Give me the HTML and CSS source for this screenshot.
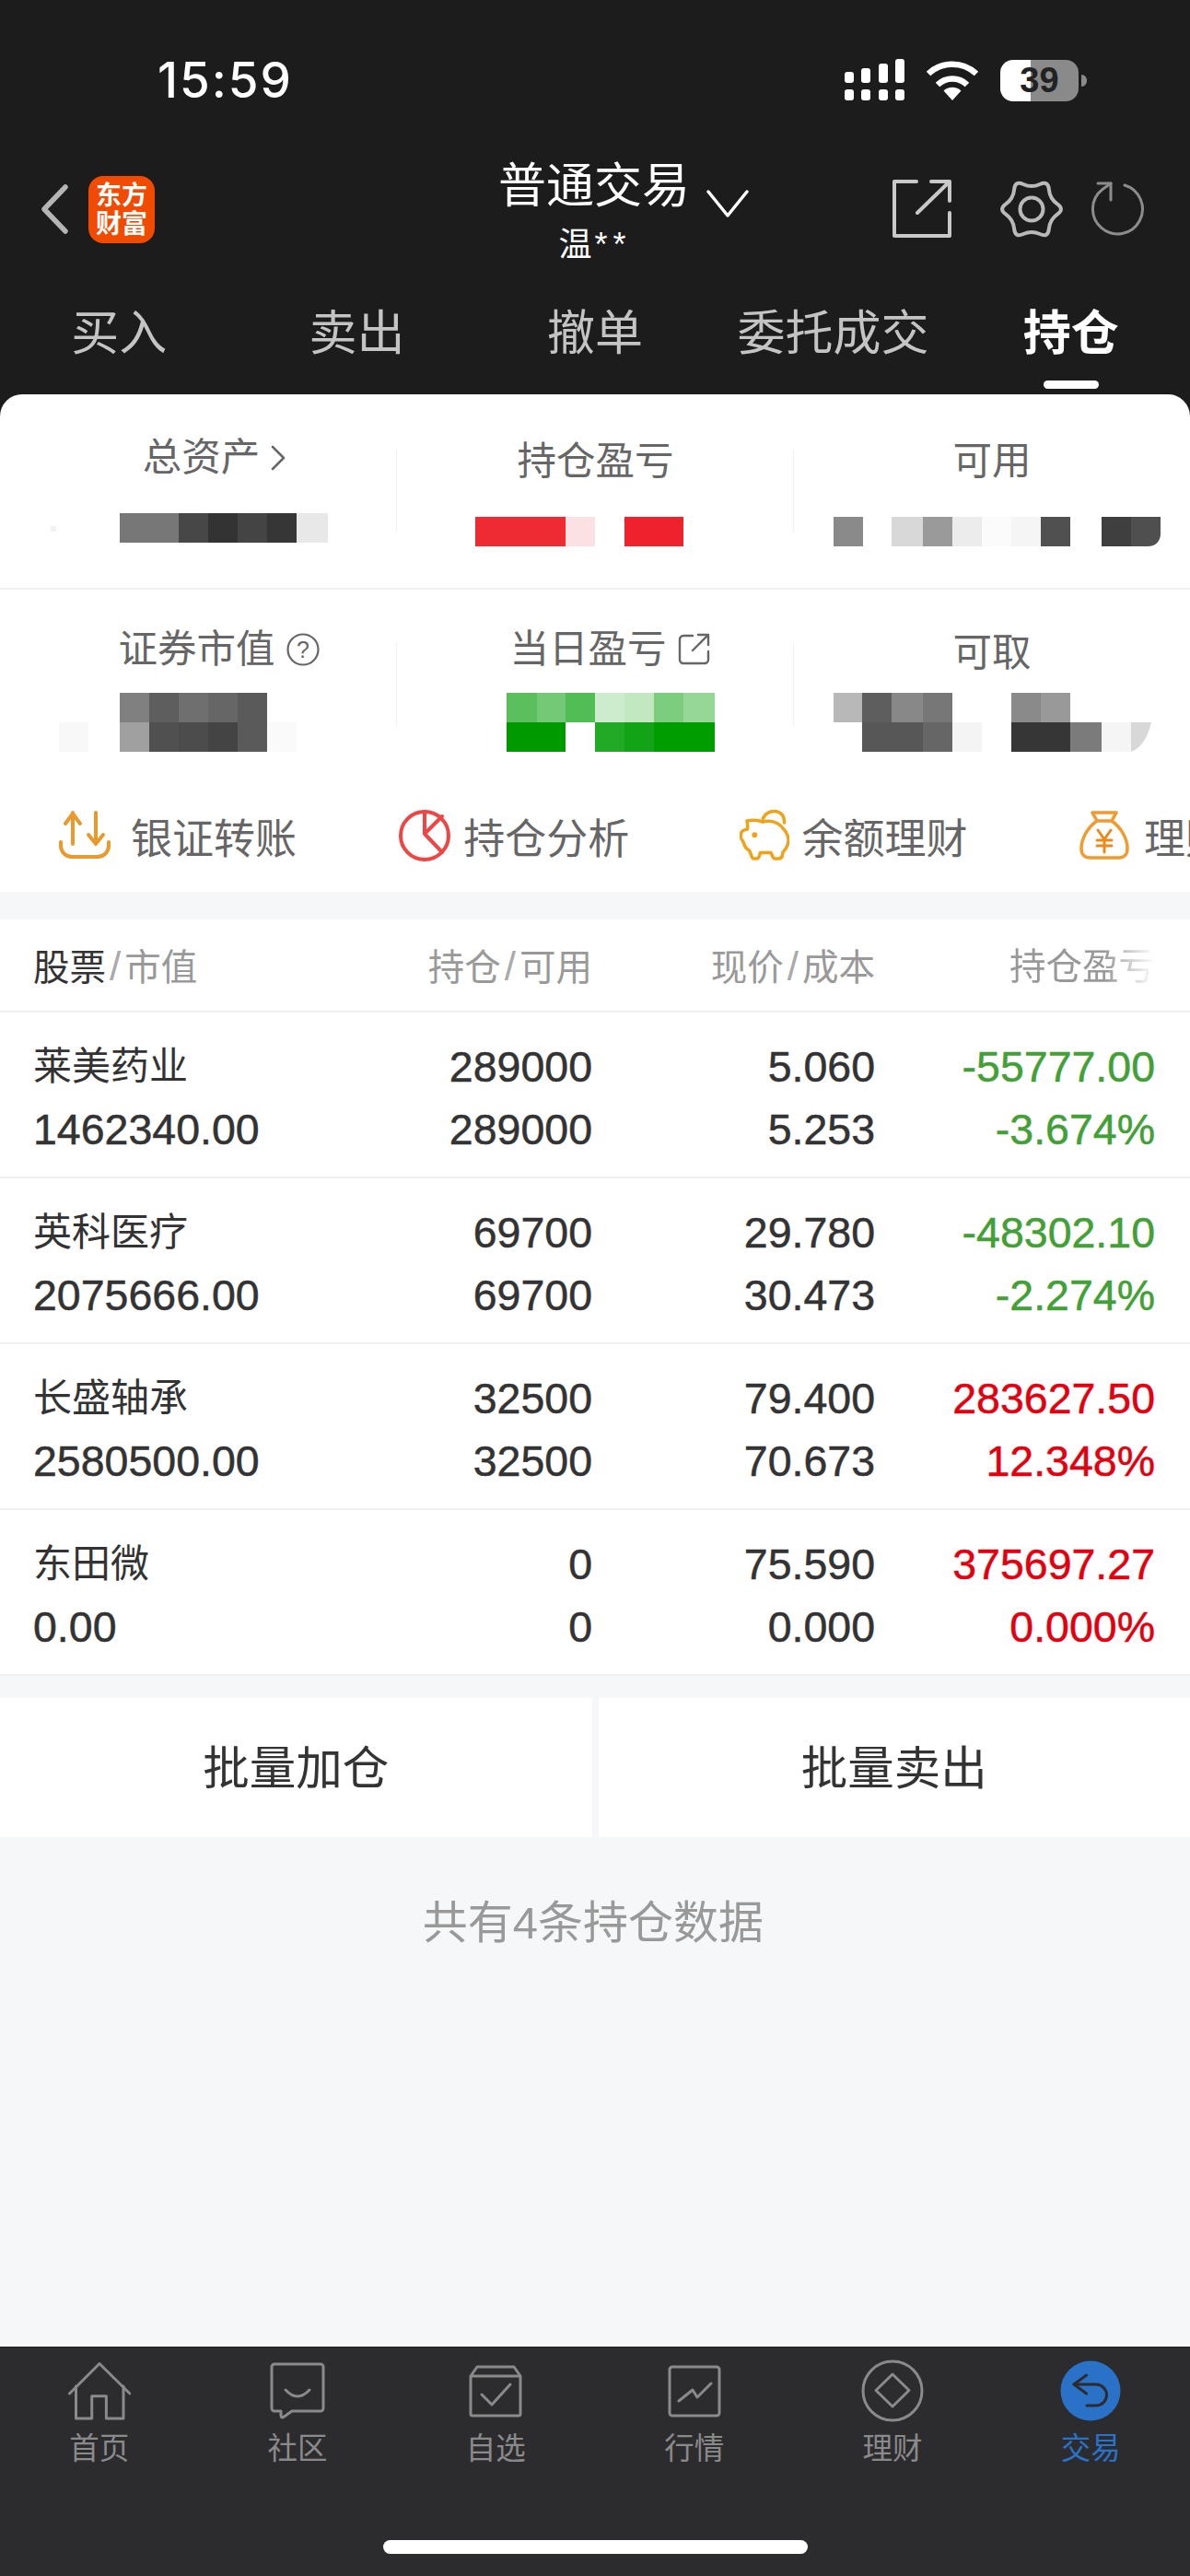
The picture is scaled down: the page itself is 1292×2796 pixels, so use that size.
FILE: index.html
```html
<!DOCTYPE html>
<html lang="zh-CN">
<head>
    <meta charset="UTF-8">
    <meta name="viewport" content="width=device-width, initial-scale=1.0">
    <title>持仓</title>
    <link rel="stylesheet" href="styles.css">
</head>
<body>
    <header class="topbar">
        <div class="statusbar">
            <span class="time">15:59</span>
            <div class="status-icons">
                <svg class="signal" width="66" height="46" viewBox="0 0 66 46" fill="#fff">
                    <rect x="0" y="14" width="10" height="12" rx="3"/>
                    <rect x="18" y="10" width="10" height="16" rx="3"/>
                    <rect x="37" y="5" width="10" height="21" rx="3"/>
                    <rect x="55" y="0" width="10" height="26" rx="3"/>
                    <rect x="0" y="33" width="10" height="12" rx="3"/>
                    <rect x="18" y="33" width="10" height="12" rx="3"/>
                    <rect x="37" y="33" width="10" height="12" rx="3"/>
                    <rect x="55" y="33" width="10" height="12" rx="3"/>
                </svg>
                <svg class="wifi" width="58" height="43" viewBox="0 0 58 43">
                    <path d="M3 14 A38 38 0 0 1 55 14" fill="none" stroke="#fff" stroke-width="6.5"/>
                    <path d="M13 26 A23 23 0 0 1 45 26" fill="none" stroke="#fff" stroke-width="6.5"/>
                    <path d="M29 43 L19.5 32.5 A14 14 0 0 1 38.5 32.5 Z" fill="#fff"/>
                </svg>
                <div class="battery">39</div>
                <div class="battery-nub"></div>
            </div>
        </div>

        <div class="navbar">
            <div class="nav-left">
                <svg width="30" height="54" viewBox="0 0 30 54" fill="none" stroke="#b5b5b5" stroke-width="5.5" stroke-linecap="round" stroke-linejoin="round">
                    <path d="M27 3 L4 27 L27 51"/>
                </svg>
                <div class="logo">东方<br>财富</div>
            </div>
            <div class="nav-title">
                <div class="title-row">
                    <span class="title">普通交易</span>
                    <svg width="46" height="30" viewBox="0 0 46 30" fill="none" stroke="#fff" stroke-width="3.5" stroke-linecap="round" stroke-linejoin="round">
                        <path d="M2 2 L23 28 L44 2"/>
                    </svg>
                </div>
                <div class="account">温<span class="mask-stars">**</span></div>
            </div>
            <div class="nav-right">
                <svg width="64" height="64" viewBox="0 0 64 64" fill="none" stroke="#c8c8c8" stroke-width="4" stroke-linejoin="round" stroke-linecap="round">
                    <path d="M26 2 H2 V61 H62 V36"/>
                    <path d="M27 36 L61 3 M42 2 H62 V23"/>
                </svg>
                <svg width="70" height="70" viewBox="-35 -35 70 70" fill="none" stroke="#b9b9b9" stroke-width="4">
                    <path d="M9 -27.05 Q18 -31.2 18.9 -21.3 Q19.8 -11.45 27.9 -5.7 Q36 0 27.9 5.7 Q19.8 11.45 18.9 21.3 Q18 31.2 9 27.05 Q0 22.9 -9 27.05 Q-18 31.2 -18.9 21.3 Q-19.8 11.45 -27.9 5.7 Q-36 0 -27.9 -5.7 Q-19.8 -11.45 -18.9 -21.3 Q-18 -31.2 -9 -27.05 Q0 -22.9 9 -27.05 Z"/>
                    <circle r="12.5"/>
                </svg>
                <svg width="62" height="62" viewBox="0 0 62 62" fill="none" stroke="#8c8c8c" stroke-width="3" stroke-linecap="round" stroke-linejoin="round">
                    <path d="M38 5 A27 27 0 1 1 14 9.5 L23 3"/>
                    <path d="M9 3 H23 V21"/>
                </svg>
            </div>
        </div>

        <nav class="tabs">
            <div class="tab">买入</div>
            <div class="tab">卖出</div>
            <div class="tab">撤单</div>
            <div class="tab">委托成交</div>
            <div class="tab active">持仓</div>
        </nav>
    </header>

    <main class="content">
        <section class="summary">
            <div class="stat-row first">
                <div class="stat">
                    <div class="stat-label raised with-arrow">总资产
                        <svg width="16" height="28" viewBox="0 0 16 28" fill="none" stroke="#666" stroke-width="2.5" stroke-linecap="round" stroke-linejoin="round"><path d="M2 2 L14 14 L2 26"/></svg>
                    </div>
                    <svg class="mosaic" width="430" height="32" viewBox="0 0 430 32">
                        <rect x="55" y="14" width="6" height="6" fill="#f2f2f2"/>
                        <rect x="130" width="64" height="32" fill="#777"/>
                        <rect x="194" width="32" height="32" fill="#474747"/>
                        <rect x="226" width="32" height="32" fill="#333"/>
                        <rect x="258" width="32" height="32" fill="#444"/>
                        <rect x="290" width="32" height="32" fill="#363636"/>
                        <rect x="322" width="34" height="32" fill="#e8e8e8"/>
                    </svg>
                </div>
                <div class="stat">
                    <div class="stat-label">持仓盈亏</div>
                    <svg class="mosaic" width="430" height="32" viewBox="431 0 430 32">
                        <rect x="516" width="98" height="32" fill="#ee2a32"/>
                        <rect x="614" width="32" height="32" fill="#fbe1e3"/>
                        <rect x="678" width="64" height="32" fill="#ee212d"/>
                    </svg>
                </div>
                <div class="stat last">
                    <div class="stat-label">可用</div>
                    <svg class="mosaic" width="430" height="32" viewBox="862 0 430 32">
                        <rect x="905" width="32" height="32" fill="#8a8a8a"/>
                        <rect x="968" width="34" height="32" fill="#d8d8d8"/>
                        <rect x="1002" width="32" height="32" fill="#9a9a9a"/>
                        <rect x="1034" width="32" height="32" fill="#ececec"/>
                        <rect x="1066" width="32" height="32" fill="#fbfbfb"/>
                        <rect x="1098" width="32" height="32" fill="#f5f5f5"/>
                        <rect x="1130" width="32" height="32" fill="#505050"/>
                        <rect x="1196" width="32" height="32" fill="#3f3f3f"/>
                        <path d="M1228 0 H1260 V20 Q1258 32 1246 32 H1228 Z" fill="#4f4f4f"/>
                    </svg>
                </div>
            </div>
            <div class="stat-row second">
                <div class="stat">
                    <div class="stat-label with-help">证券市值
                        <svg width="36" height="36" viewBox="0 0 36 36" fill="none" stroke="#666" stroke-width="2.2">
                            <circle cx="18" cy="18" r="16.5"/>
                            <text class="help-mark" x="18" y="26.5" text-anchor="middle">?</text>
                        </svg>
                    </div>
                    <svg class="mosaic" width="430" height="64" viewBox="0 0 430 64">
                        <rect x="130" width="32" height="32" fill="#808080"/>
                        <rect x="162" width="32" height="32" fill="#5e5e5e"/>
                        <rect x="194" width="32" height="32" fill="#6f6f6f"/>
                        <rect x="226" width="32" height="32" fill="#666"/>
                        <rect x="258" width="32" height="64" fill="#5a5a5a"/>
                        <rect x="64" y="32" width="32" height="32" fill="#f8f8f8"/>
                        <rect x="130" y="32" width="32" height="32" fill="#a0a0a0"/>
                        <rect x="162" y="32" width="32" height="32" fill="#505050"/>
                        <rect x="194" y="32" width="32" height="32" fill="#4c4c4c"/>
                        <rect x="226" y="32" width="32" height="32" fill="#444"/>
                        <rect x="290" y="32" width="32" height="32" fill="#fafafa"/>
                    </svg>
                </div>
                <div class="stat">
                    <div class="stat-label with-open">当日盈亏
                        <svg width="36" height="36" viewBox="0 0 36 36" fill="none" stroke="#666" stroke-width="2.4" stroke-linecap="round" stroke-linejoin="round">
                            <path d="M16 3 H6 a4 4 0 0 0 -4 4 V29 a4 4 0 0 0 4 4 H29 a4 4 0 0 0 4 -4 V20"/>
                            <path d="M16 19 L32 3 M22 2 H33 V13"/>
                        </svg>
                    </div>
                    <svg class="mosaic" width="430" height="64" viewBox="431 0 430 64">
                        <rect x="550" width="33" height="32" fill="#5cbf5e"/>
                        <rect x="583" width="31" height="32" fill="#74c976"/>
                        <rect x="614" width="32" height="32" fill="#52bc55"/>
                        <rect x="646" width="32" height="32" fill="#cdeccd"/>
                        <rect x="678" width="32" height="32" fill="#c2e8c2"/>
                        <rect x="710" width="32" height="32" fill="#7ccd7e"/>
                        <rect x="742" width="34" height="32" fill="#96d697"/>
                        <rect x="550" y="32" width="64" height="32" fill="#009a00"/>
                        <rect x="646" y="32" width="32" height="32" fill="#22aa26"/>
                        <rect x="678" y="32" width="32" height="32" fill="#12a316"/>
                        <rect x="710" y="32" width="66" height="32" fill="#009d00"/>
                    </svg>
                </div>
                <div class="stat last">
                    <div class="stat-label lowered">可取</div>
                    <svg class="mosaic" width="430" height="64" viewBox="862 0 430 64">
                        <rect x="905" width="31" height="32" fill="#b8b8b8"/>
                        <rect x="936" width="32" height="32" fill="#5e5e5e"/>
                        <rect x="968" width="34" height="32" fill="#888"/>
                        <rect x="1002" width="32" height="32" fill="#777"/>
                        <rect x="1098" width="32" height="32" fill="#8a8a8a"/>
                        <rect x="1130" width="32" height="32" fill="#999"/>
                        <rect x="936" y="32" width="66" height="32" fill="#575757"/>
                        <rect x="1002" y="32" width="32" height="32" fill="#666"/>
                        <rect x="1034" y="32" width="32" height="32" fill="#f4f4f4"/>
                        <rect x="1098" y="32" width="64" height="32" fill="#363636"/>
                        <rect x="1162" y="32" width="34" height="32" fill="#7b7b7b"/>
                        <rect x="1196" y="32" width="32" height="32" fill="#f5f5f5"/>
                        <path d="M1228 32 H1250 Q1244 58 1228 64 Z" fill="#d8d8d8"/>
                    </svg>
                </div>
            </div>
            <div class="actions">
                <div class="action">
                    <svg width="62" height="54" viewBox="0 0 62 54" fill="none" stroke="#e89a2e" stroke-width="4" stroke-linecap="round" stroke-linejoin="round">
                        <path d="M15 2 V36 M7 14 L15 3 L23 14"/>
                        <path d="M40 2 V36 M32 26 L40 36 L48 26"/>
                        <path d="M2 34 V38 a12 12 0 0 0 12 12 H42 a12 12 0 0 0 12 -12 V34"/>
                    </svg>
                    <span>银证转账</span>
                </div>
                <div class="action tight">
                    <svg width="56" height="56" viewBox="0 0 56 56" fill="none" stroke="#ee4545" stroke-width="4" stroke-linecap="round" stroke-linejoin="round">
                        <circle cx="28" cy="28" r="26"/>
                        <path d="M28 2 V26 L47 7 M28 26 L47 46"/>
                    </svg>
                    <span>持仓分析</span>
                </div>
                <div class="action tight">
                    <svg width="54" height="56" viewBox="0 0 54 56" fill="none" stroke="#efa21a" stroke-width="3.5" stroke-linecap="round" stroke-linejoin="round">
                        <path d="M8 12 Q18 10 25 13 C33 11 42 13 47 20 C52 25 53 29 53 33 C53 38 50 43 47 46 L46.5 49 Q46 53 42 53 H39 Q36.5 53 35.5 50 L34 46.5 H22.5 L21.5 50 Q20.5 53 18 53 H16 Q13.5 53 13 50 L10.5 44 Q6 42 4.5 36 L3 33 Q1 32 1.5 26 Q2 22 8.5 21 Q9 17 8 12 Z"/>
                        <path d="M25 13 C25 6 31 1.5 37.5 1.5 C44 1.5 49 6 48.5 14"/>
                        <circle cx="16.3" cy="27.3" r="1.2" fill="#efa21a"/>
                    </svg>
                    <span>余额理财</span>
                </div>
                <div class="action">
                    <svg width="54" height="54" viewBox="0 0 54 54" fill="none" stroke="#f09a30" stroke-width="3.5" stroke-linecap="round" stroke-linejoin="round">
                        <path d="M14 2 H40 L35 11 C45 18 52 30 52 41 C52 48 48 51 43 51 H11 C6 51 2 48 2 41 C2 30 9 18 19 11 Z M19 11 H35"/>
                        <path d="M20 21 L27 31 L34 21 M19 32 H35 M19 38 H35 M27 31 V45" stroke="#ea8a1d" stroke-width="3"/>
                    </svg>
                    <span>理财产品</span>
                </div>
            </div>
        </section>

        <section class="holdings">
            <div class="holding-row holding-head">
                <div><b>股票</b><i class="slash">/</i>市值</div>
                <div class="num">持仓<i class="slash">/</i>可用</div>
                <div class="num">现价<i class="slash">/</i>成本</div>
                <div class="num"><span class="fade">持仓盈亏</span></div>
            </div>
            <div class="holding-row">
                <div><div class="name">莱美药业</div>1462340.00</div>
                <div class="num">289000<br>289000</div>
                <div class="num">5.060<br>5.253</div>
                <div class="num loss">-55777.00<br>-3.674%</div>
            </div>
            <div class="holding-row">
                <div><div class="name">英科医疗</div>2075666.00</div>
                <div class="num">69700<br>69700</div>
                <div class="num">29.780<br>30.473</div>
                <div class="num loss">-48302.10<br>-2.274%</div>
            </div>
            <div class="holding-row">
                <div><div class="name">长盛轴承</div>2580500.00</div>
                <div class="num">32500<br>32500</div>
                <div class="num">79.400<br>70.673</div>
                <div class="num gain">283627.50<br>12.348%</div>
            </div>
            <div class="holding-row">
                <div><div class="name">东田微</div>0.00</div>
                <div class="num">0<br>0</div>
                <div class="num">75.590<br>0.000</div>
                <div class="num gain">375697.27<br>0.000%</div>
            </div>
        </section>

        <div class="batch">
            <div class="batch-btn">批量加仓</div>
            <div class="batch-btn">批量卖出</div>
        </div>

        <p class="count">共有4条持仓数据</p>
    </main>

    <footer class="tabbar">
        <div class="tabbar-items">
            <div class="tabbar-item">
                <div class="tabbar-icon">
                    <svg width="68" height="63" viewBox="0 0 68 63" fill="none" stroke="#8a8a8a" stroke-width="3" stroke-linecap="round" stroke-linejoin="round">
                        <path d="M1.5 34 L34 1.5 L67 34"/>
                        <path d="M8.5 26 V61 H25.7 V36.7 H41.4 V61 H60 V26"/>
                    </svg>
                </div>
                <span>首页</span>
            </div>
            <div class="tabbar-item">
                <div class="tabbar-icon">
                    <svg width="60" height="62" viewBox="0 0 60 62" fill="none" stroke="#8a8a8a" stroke-width="3" stroke-linecap="round" stroke-linejoin="round">
                        <path d="M5 2 H55 a3 3 0 0 1 3 3 V50 a3 3 0 0 1 -3 3 H24 L14 60 Q12 60 12 57 V53 H5 a3 3 0 0 1 -3 -3 V5 a3 3 0 0 1 3 -3 Z"/>
                        <path d="M17 30 Q30 44 43 30"/>
                    </svg>
                </div>
                <span>社区</span>
            </div>
            <div class="tabbar-item">
                <div class="tabbar-icon">
                    <svg width="58" height="57" viewBox="0 0 58 57" fill="none" stroke="#8a8a8a" stroke-width="3" stroke-linecap="round" stroke-linejoin="round">
                        <path d="M2 12 L9 2 H49 L56 12 V53 a2 2 0 0 1 -2 2 H4 a2 2 0 0 1 -2 -2 Z M2 12 H56"/>
                        <path d="M14 32 L25 43 L45 21"/>
                    </svg>
                </div>
                <span>自选</span>
            </div>
            <div class="tabbar-item">
                <div class="tabbar-icon">
                    <svg width="58" height="57" viewBox="0 0 58 57" fill="none" stroke="#8a8a8a" stroke-width="3" stroke-linecap="round" stroke-linejoin="round">
                        <rect x="2" y="2" width="54" height="53" rx="3"/>
                        <path d="M12 39 L27 27 L32 35 L47 20"/>
                    </svg>
                </div>
                <span>行情</span>
            </div>
            <div class="tabbar-item">
                <div class="tabbar-icon">
                    <svg width="68" height="68" viewBox="0 0 68 68" fill="none" stroke="#8a8a8a" stroke-width="3" stroke-linejoin="round">
                        <circle cx="34" cy="34" r="32"/>
                        <path d="M34 16 L52 33.5 L34 51 L16 33.5 Z"/>
                    </svg>
                </div>
                <span>理财</span>
            </div>
            <div class="tabbar-item active">
                <div class="tabbar-icon">
                    <svg width="66" height="66" viewBox="0 0 66 66" fill="none" stroke="#2c2c2e" stroke-width="3" stroke-linecap="round" stroke-linejoin="round">
                        <circle cx="33" cy="33" r="32.5" fill="#2a72c8" stroke="none"/>
                        <path d="M28.6 16 L15 26 L28.6 36"/>
                        <path d="M15 26 H39 A11.5 11.5 0 0 1 39 49 H29"/>
                    </svg>
                </div>
                <span>交易</span>
            </div>
        </div>
        <div class="home-indicator"></div>
    </footer>
</body>
</html>
```

FILE: styles.css
```css
* {
    box-sizing: border-box;
}
html, body {
    margin: 0;
    padding: 0;
}
body {
    width: 1292px;
    height: 2796px;
    overflow: hidden;
    display: flex;
    flex-direction: column;
    background-color: #f6f7f9;
    color: #333;
    font-family: "Liberation Sans", "Noto Sans CJK SC", sans-serif;
}
svg {
    display: block;
    flex-shrink: 0;
}

/* Top dark area */
.topbar {
    height: 428px;
    background-color: #1c1c1c;
    color: #fff;
}
.statusbar {
    height: 174px;
    padding: 0 112px 0 171px;
    display: flex;
    align-items: center;
    justify-content: space-between;
}
.time {
    font-family: Inter, sans-serif;
    font-size: 53px;
    font-weight: 500;
    letter-spacing: 2px;
    color: #fff;
}
.status-icons {
    display: flex;
    align-items: center;
}
.wifi {
    margin-left: 22px;
}
.battery {
    width: 85px;
    height: 45px;
    margin-left: 23px;
    border-radius: 14px;
    background: linear-gradient(90deg, #fff 39%, #8a8a8a 39%);
    color: #222;
    font-size: 38px;
    font-weight: bold;
    line-height: 45px;
    text-align: center;
}
.battery-nub {
    width: 6px;
    height: 13px;
    margin-left: 3px;
    border-radius: 0 6px 6px 0;
    background-color: #8a8a8a;
}
.navbar {
    height: 126px;
    display: grid;
    grid-template-columns: 1fr auto 1fr;
}
.nav-left, .nav-right {
    height: 106px;
    display: flex;
    align-items: center;
}
.nav-left {
    padding-left: 44px;
    gap: 22px;
}
.logo {
    width: 72px;
    height: 73px;
    border-radius: 16px;
    background-color: #f04b00;
    color: #fff;
    font-size: 28px;
    font-weight: bold;
    line-height: 31px;
    text-align: center;
    padding-top: 6px;
}
.nav-title {
    display: flex;
    flex-direction: column;
    align-items: center;
}
.title-row {
    display: flex;
    align-items: flex-start;
    gap: 18px;
    padding-left: 62px;
    height: 56px;
}
.title {
    font-size: 52px;
    line-height: 56px;
}
.title-row svg {
    margin-top: 32px;
}
.account {
    margin-top: 16px;
    font-size: 36px;
    line-height: 40px;
}
.mask-stars {
    margin-left: 3px;
    letter-spacing: 6px;
}
.nav-right {
    justify-content: flex-end;
    padding-right: 47px;
    gap: 28px;
}
.nav-right svg:first-child {
    margin-right: 24px;
}
.tabs {
    height: 128px;
    display: flex;
}
.tab {
    flex: 1;
    padding-top: 32px;
    text-align: center;
    font-size: 52px;
    line-height: 60px;
    color: #c4c4c4;
}
.tab.active {
    color: #fff;
    font-weight: bold;
}
.tab.active::after {
    content: "";
    display: block;
    width: 60px;
    height: 9px;
    margin: 21px auto 0;
    border-radius: 5px;
    background-color: #fff;
}

/* Page content */
.content {
    flex: 1;
    background: linear-gradient(#1c1c1c 24px, #f6f7f9 24px);
}
.summary {
    background-color: #fff;
    border-radius: 24px 24px 0 0;
    margin-bottom: 30px;
}
.stat-row {
    display: grid;
    grid-template-columns: 431px 431px 430px;
}
.stat-row.first {
    height: 212px;
    padding-top: 43px;
    border-bottom: 2px solid #f0f0f0;
}
.stat-row.second {
    padding-top: 35px;
}
.stat {
    background: linear-gradient(#f0f0f0, #f0f0f0) no-repeat right 17px / 1px 90px;
}
.second .stat {
    background-position: right 23px;
}
.stat.last, .second .stat.last {
    background: none;
}
.stat-label {
    height: 60px;
    display: flex;
    align-items: center;
    justify-content: center;
    gap: 12px;
    font-size: 42.5px;
    line-height: 60px;
    color: #666;
}
.stat-label.raised {
    margin: -4px 0 4px;
}
.stat-label.lowered {
    margin: 4px 0 -4px;
}
.with-arrow {
    padding-left: 34px;
}
.with-help {
    padding-left: 44px;
}
.with-open {
    padding-left: 32px;
}
.help-mark {
    font-size: 25px;
    font-family: "Liberation Sans", sans-serif;
    fill: #666;
    stroke: none;
}
.mosaic {
    filter: blur(0.6px);
}
.first .mosaic {
    margin-top: 30px;
}
.second .mosaic {
    margin-top: 17px;
}
.actions {
    height: 152px;
    padding: 30px 0 0 64px;
    display: flex;
    align-items: center;
}
.action {
    flex: 0 0 369.3px;
    display: flex;
    align-items: center;
    gap: 16px;
    font-size: 45px;
    color: #666;
    white-space: nowrap;
}
.action.tight {
    gap: 14px;
}

/* Holdings table */
.holdings {
    background-color: #fff;
    margin-bottom: 24px;
}
.holding-row {
    display: grid;
    grid-template-columns: 307px 300px 307px 304px;
    padding: 25px 0 0 36px;
    height: 180px;
    border-bottom: 2px solid #f0f0f0;
    font-size: 46.5px;
    line-height: 68px;
    color: #333;
    -webkit-text-stroke: 0.5px currentColor;
}
.holding-head {
    height: 101px;
    padding: 3px 0 0 36px;
    align-items: center;
    font-size: 39.5px;
    line-height: 50px;
    color: #999;
    -webkit-text-stroke: 0;
}
.holding-head b {
    font-weight: normal;
    color: #333;
}
.slash {
    margin: 0 4px;
    font-size: 44px;
    font-style: normal;
    color: #aaa;
}
.name {
    font-size: 42px;
    -webkit-text-stroke: 0;
}
.num {
    text-align: right;
}
.loss {
    color: #43a037;
}
.gain {
    color: #e1000f;
}
.fade {
    -webkit-mask-image: linear-gradient(90deg, #000 65%, transparent 100%);
    mask-image: linear-gradient(90deg, #000 65%, transparent 100%);
}

/* Batch buttons */
.batch {
    display: flex;
    gap: 7px;
}
.batch-btn {
    flex: 1;
    height: 151px;
    padding-top: 2px;
    background-color: #fff;
    font-size: 50.5px;
    line-height: 149px;
    text-align: center;
    color: #333;
}
.count {
    margin: 63px 0 0;
    padding-right: 4px;
    font-size: 49px;
    line-height: 60px;
    text-align: center;
    color: #999;
}

/* Bottom tab bar */
.tabbar {
    height: 249px;
    background-color: #2c2c2e;
    border-top: 1px solid #1c1c1e;
}
.tabbar-items {
    display: flex;
}
.tabbar-item {
    flex: 1;
    display: flex;
    flex-direction: column;
    align-items: center;
    font-size: 32.5px;
    line-height: 40px;
    color: #8a8a8a;
}
.tabbar-item.active {
    color: #2a72c8;
}
.tabbar-icon {
    height: 68px;
    margin: 13px 0 9px;
    display: flex;
    align-items: center;
}
.home-indicator {
    width: 461px;
    height: 15px;
    margin: 79px auto 0;
    border-radius: 8px;
    background-color: #fff;
}
```
